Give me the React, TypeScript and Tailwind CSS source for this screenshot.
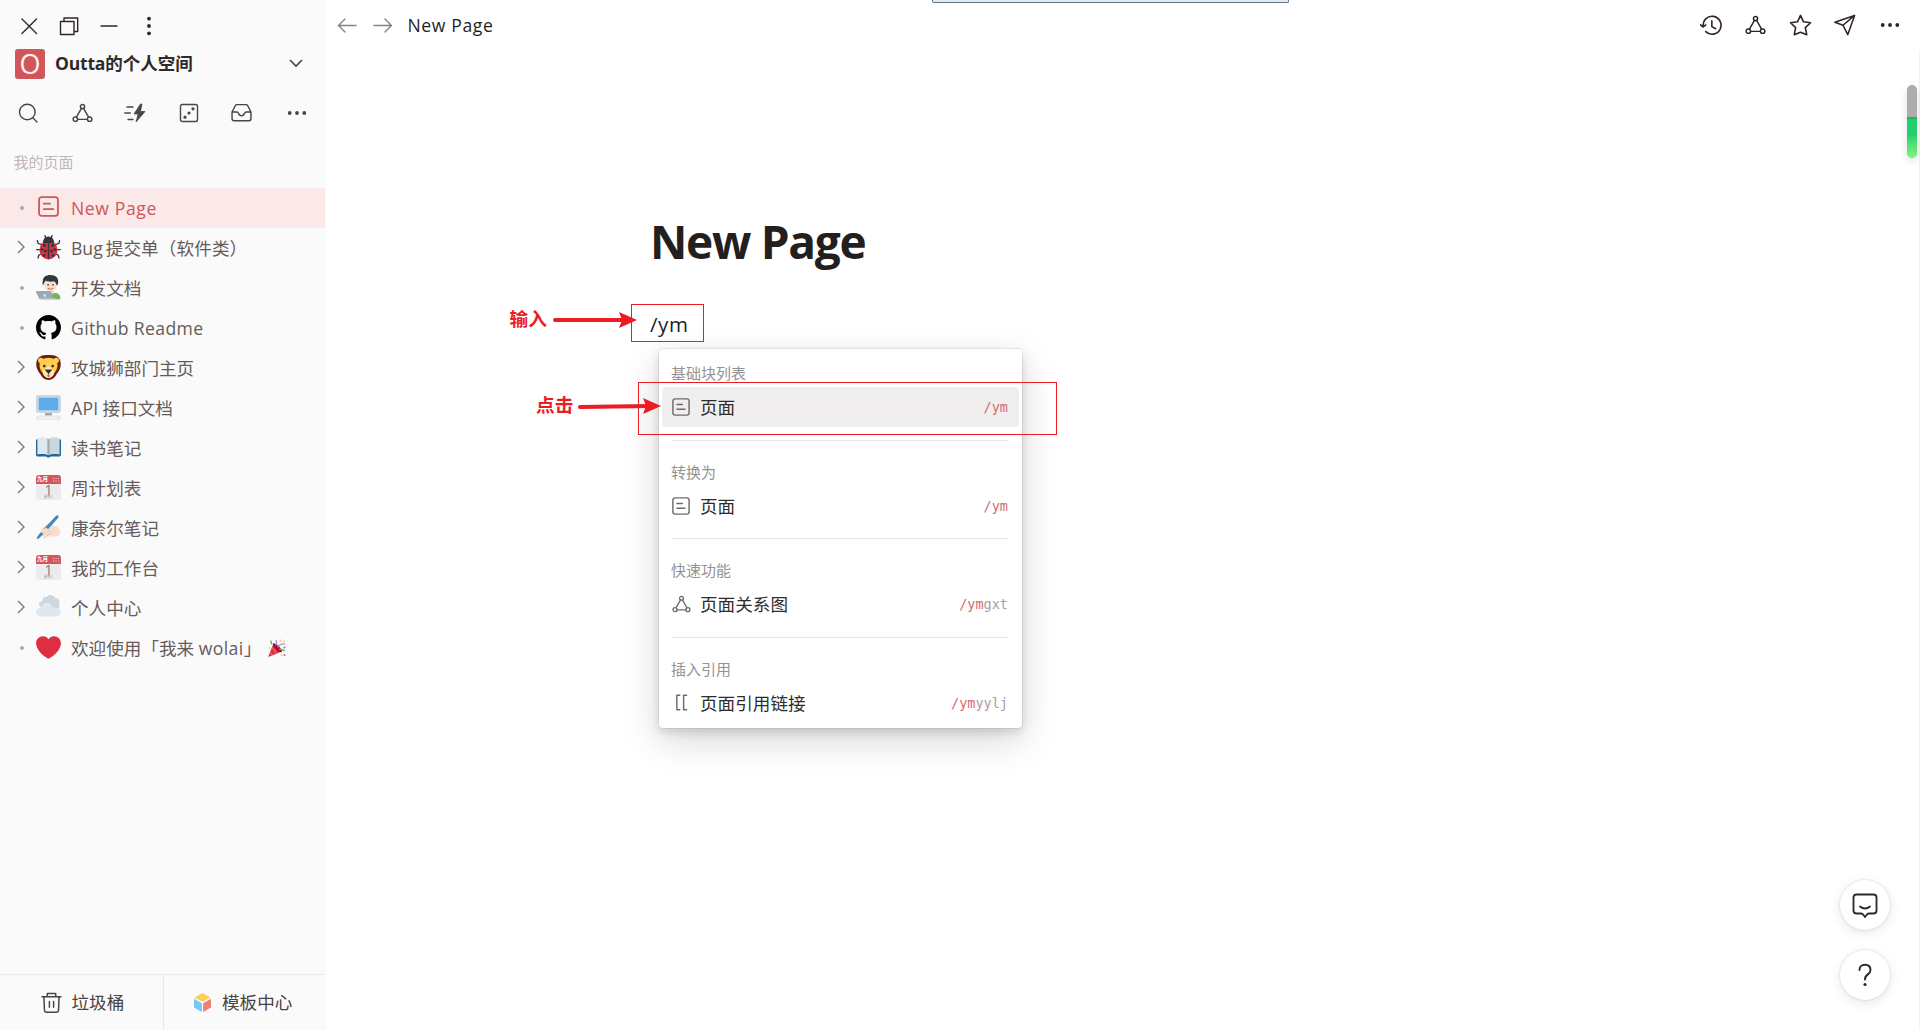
import type { ReactNode } from 'react';

const sans = "font-['Open_Sans','Noto_Sans_CJK_SC',sans-serif]";

type IconProps = { className?: string };

function Stroke({ children, size = 20, width = 1.4, className = '' }: { children: ReactNode; size?: number; width?: number; className?: string }) {
  return (
    <svg width={size} height={size} viewBox="0 0 20 20" fill="none" stroke="currentColor" strokeWidth={width} strokeLinecap="round" strokeLinejoin="round" className={`shrink-0 ${className}`}>
      {children}
    </svg>
  );
}

function GraphIcon({ size = 22, className = '' }: IconProps & { size?: number }) {
  return (
    <Stroke size={size} className={className}>
      <circle cx="10" cy="3.4" r="2" />
      <circle cx="3.2" cy="15.4" r="2.1" />
      <circle cx="16.8" cy="15.4" r="2.1" />
      <path d="M9 5.2 4.2 13.5M11 5.2l4.8 8.3M5.4 15.6h9.2" />
    </Stroke>
  );
}

function PageIcon({ size = 20, className = '', width = 1.4 }: IconProps & { size?: number; width?: number }) {
  return (
    <Stroke size={size} width={width} className={className}>
      <rect x="1" y="1" width="18" height="18" rx="2.5" />
      <path d="M5.5 7.3h6M5.5 12.6h9" />
    </Stroke>
  );
}

function Dots({ vertical = false }: { vertical?: boolean }) {
  return (
    <svg width="20" height="20" viewBox="0 0 20 20" fill="currentColor" className={vertical ? 'rotate-90' : ''}>
      <circle cx="2.7" cy="10" r="1.9" />
      <circle cx="10" cy="10" r="1.9" />
      <circle cx="17.3" cy="10" r="1.9" />
    </svg>
  );
}

function Emoji({ children }: { children: ReactNode }) {
  return <svg width="25" height="25" viewBox="0 0 36 36">{children}</svg>;
}

const ladybug = (
  <Emoji>
    <g stroke="#31373d" strokeWidth="2" strokeLinecap="round" fill="none">
      <path d="M8 14 3 12 2 8M28 14l5-2 1-4M7 21H1M29 21h6M8 27l-4 2-1 4M28 27l4 2 1 4" />
      <path d="M14 4l-1-3M22 4l1-3" />
    </g>
    <path d="M10 11c0-5 3-9 8-9s8 4 8 9z" fill="#31373d" />
    <ellipse cx="18" cy="21.5" rx="13" ry="13.5" fill="#dd2e44" />
    <path d="M17 8h2v27h-2z" fill="#31373d" />
    <path d="M9 11q9-6 18 0l-3 1q-6-2-12 0z" fill="#31373d" />
    <g fill="#31373d">
      <circle cx="12" cy="15" r="2.3" /><circle cx="24" cy="15" r="2.3" />
      <circle cx="8.7" cy="21" r="2" /><circle cx="27.3" cy="21" r="2" />
      <circle cx="13.5" cy="23" r="2.2" /><circle cx="22.5" cy="23" r="2.2" />
      <circle cx="11.5" cy="29.5" r="2" /><circle cx="24.5" cy="29.5" r="2" />
    </g>
  </Emoji>
);

const technologist = (
  <Emoji>
    <path d="M8 36v-4c0-4 4-6 8-6h11c5 0 8 3 8 7v2z" fill="#77b255" />
    <path d="M17 22h8v5q-4 4-8 0z" fill="#f3d2c3" />
    <ellipse cx="21" cy="14" rx="9" ry="10.5" fill="#f7dece" />
    <path d="M21 0c7 0 11 4 11 9 0 4-1 6-2 6-1-3-2-5-4-6-3 1-9 1-12-1-1 2-3 3-3.500 7C9 14 9 11 10 8c0-5 4-8 11-8z" fill="#31373d" />
    <circle cx="17.500" cy="14" r="1.200" fill="#662113" /><circle cx="24.500" cy="14" r="1.200" fill="#662113" />
    <path d="M17 19q4 3 8 0" stroke="#c1694f" strokeWidth="1.500" fill="none" />
    <path d="M1 23h19c1 0 2 1 2.300 2L25 35H5L0 25c0-1 0-2 1-2z" fill="#99aab5" />
    <path d="M5 34h24c1 0 1 2 0 2H7z" fill="#ccd6dd" />
    <ellipse cx="12.500" cy="29.500" rx="1.600" ry="2.200" fill="#e1e8ed" />
  </Emoji>
);

const github = (
  <svg width="25" height="25" viewBox="0 0 16 16">
    <path d="M8 0C3.580 0 0 3.580 0 8c0 3.540 2.290 6.530 5.470 7.590.4.070.55-.17.55-.38 0-.19-.01-.82-.01-1.490-2.010.37-2.530-.49-2.690-.94-.09-.23-.48-.94-.82-1.130-.28-.15-.68-.52-.01-.53.63-.01 1.080.58 1.230.82.72 1.210 1.870.87 2.330.66.070-.52.28-.87.51-1.070-1.780-.2-3.640-.89-3.640-3.950 0-.87.31-1.590.82-2.150-.08-.2-.36-1.020.080-2.120 0 0 .67-.21 2.200.82.64-.18 1.320-.27 2-.27.68 0 1.360.090 2 .27 1.530-1.040 2.200-.82 2.200-.82.44 1.100.16 1.920.080 2.120.51.56.82 1.270.82 2.150 0 3.070-1.870 3.750-3.650 3.950.29.25.54.73.54 1.480 0 1.070-.01 1.930-.01 2.200 0 .21.15.46.55.38A8.013 8.013 0 0016 8c0-4.420-3.580-8-8-8z" />
  </svg>
);

const lion = (
  <Emoji>
    <path d="M18 0C8 0 5 2 2 6c-2 4-2 8-1 12 1 3 2 6 5 9 2 5 7 9 12 9s10-4 12-9c3-3 4-6 5-9 1-4 1-8-1-12-3-4-6-6-16-6z" fill="#662113" />
    <circle cx="7" cy="8" r="4" fill="#ffcc4d" /><circle cx="29" cy="8" r="4" fill="#ffcc4d" />
    <path d="M18 4C11 4 6 8 5 14c0 5 2 9 5 12 2 4 5 7 8 7s6-3 8-7c3-3 5-7 5-12C30 8 25 4 18 4z" fill="#ffcc4d" />
    <path d="M18 16l5 5c3 1 4 3 3 6-1 4-5 6-8 6s-7-2-8-6c-1-3 0-5 3-6z" fill="#ffe8b6" />
    <path d="M14 21h8c1 0 1 1 0 2l-3 3v2h-2v-2l-3-3c-1-1-1-2 0-2z" fill="#292f33" />
    <circle cx="12" cy="16" r="1.900" fill="#292f33" /><circle cx="24" cy="16" r="1.900" fill="#292f33" />
    <path d="M16 29h4v1q-2 3-4 0z" fill="#dd2e44" />
  </Emoji>
);

const computer = (
  <Emoji>
    <path d="M13 24h10v6H13z" fill="#99aab5" />
    <rect width="36" height="26" rx="4" fill="#ccd6dd" />
    <rect x="4" y="4" width="28" height="18" rx="1" fill="#5dadec" />
    <rect x="0" y="29.500" width="36" height="6.500" rx="3" fill="#e1e8ed" />
    <path d="M3 31.700h30M4 34h28" stroke="#fff" strokeWidth="1.200" strokeDasharray="2 1" />
  </Emoji>
);

const book = (
  <Emoji>
    <path d="M1.500 6h33c1 0 1.500 1 1.500 2v20c0 2-1 3-3 3H21c-1 2-5 2-6 0H3c-2 0-3-1-3-3V8c0-1 .5-2 1.500-2z" fill="#226699" />
    <path d="M2 5c6-3 13-2 16 1v23c-4-2-10-2-16-1z" fill="#e1e8ed" />
    <path d="M34 5c-6-3-13-2-16 1v23c4-2 10-2 16-1z" fill="#ccd6dd" />
    <path d="M16 4.500q1.500.5 2 1.500v23q-1-1-2-1zM20 4.500q-1.500.5-2 1.500v23q1-1 2-1z" fill="#99aab5" opacity=".7" />
  </Emoji>
);

const calendar = (
  <span className="flex h-[25px] w-[25px] flex-col overflow-hidden rounded-[3px] bg-[#ececec]">
    <span className="flex h-[9px] shrink-0 items-center justify-between bg-[#d3565c] pr-[2px] pl-px">
      <span className="text-[5.500px] leading-[9px] font-bold text-white">九月</span>
      <svg width="6" height="4" viewBox="0 0 6 4" fill="#f5cfd1"><path d="M0 0h1v1H0zM2.500 0h1v1h-1zM5 0h1v1H5zM0 2.500h1v1H0zM2.500 2.500h1v1h-1zM5 2.500h1v1H5z" /></svg>
    </span>
    <span className="h-[11px] shrink-0 text-center text-[14px] leading-[12px] text-[#7b7b7b]">1</span>
    <span className="h-[4px] text-center text-[3px] leading-[4px] text-[#8899a6]">星期三</span>
  </span>
);

const writing = (
  <Emoji>
    <path d="M8 20c2-3 9-8 13-8l6 4c4 0 8 4 8 8 0 5-4 7-9 7h-9l-4 3c-2 1-3-1-2-3l-5-1c-3-1-3-3 0-4z" fill="#f7dece" />
    <path d="M12 25l9-3M14 31l7-5M10 21l8-4" stroke="#e5b9a3" strokeWidth="1.300" fill="none" />
    <path d="M29 1c1-2 5 0 3 3L16 22l-4-3z" fill="#3b88c3" />
    <path d="M14 18l-4 6c3 0 4 1 4 2l5-5z" fill="#f7dece" />
    <path d="M7 25l4 2-7 7-3 1 1-4z" fill="#3b88c3" />
  </Emoji>
);

const cloud = (
  <Emoji>
    <path d="M5 16c-2-4 1-7 4-7 0-5 3-7 6-6 4-5 12-3 13 2 4-1 7 3 5 7 2 4 0 8-4 8H10z" fill="#ccd6dd" />
    <path d="M27 18c-1 0-2 0-3 .500C23 14 20 11 16 11c-5 0-8 3-8 8-5-1-8 3-8 6 0 4 3 6 6 6h22c5 0 8-3 8-6.500S32 18 27 18z" fill="#e1e8ed" />
  </Emoji>
);

const heart = (
  <Emoji>
    <path fill="#dd2e44" d="M35.885 11.833c0-5.450-4.418-9.868-9.867-9.868-3.308 0-6.227 1.633-8.018 4.129-1.791-2.496-4.710-4.129-8.017-4.129-5.450 0-9.868 4.417-9.868 9.868 0 .772.098 1.520.266 2.241C1.751 22.587 11.216 31.568 18 34.034c6.783-2.466 16.249-11.447 17.617-19.959.170-.721.268-1.469.268-2.242z" />
  </Emoji>
);

const party = (
  <svg width="18" height="18" viewBox="0 0 36 36" className="ml-[7px] inline-block align-[-2px]">
    <path d="M11 9L1 34c-1 2 0 2 2 1l25-10z" fill="#dd2e44" />
    <path d="M8 17l9 12M4 27l5 5" stroke="#ea596e" strokeWidth="3" />
    <ellipse cx="19" cy="17.500" rx="4" ry="12" transform="rotate(-45 19 17.500)" fill="#a0041e" />
    <path d="M19 17c3-5 7-8 15-7M15 13c3-4 3-7 1-11" stroke="#aa8dd8" strokeWidth="2.500" fill="none" />
    <path d="M22 21c4-2 8 0 12 3M5 3l3 8" stroke="#77b255" strokeWidth="3" fill="none" />
    <g fill="#ffcc4d"><circle cx="25" cy="3" r="2.200" /><circle cx="32" cy="5" r="2" /><circle cx="27" cy="32" r="2" /><circle cx="3" cy="18" r="2" /></g>
    <g fill="#9266cc"><circle cx="33" cy="17" r="2" /><circle cx="33" cy="32" r="2" /></g>
  </svg>
);

type Item = { label: ReactNode; icon: ReactNode; expandable?: boolean; active?: boolean };

const items: Item[] = [
  { label: <span className="tracking-[0.600px]">New Page</span>, icon: <PageIcon size={21} width={1.700} className="mx-[2px] mb-[3px]" />, active: true },
  { label: <><span>Bug</span><span className="ml-[3px] tracking-[0.100px]">提交单（软件类）</span></>, icon: ladybug, expandable: true },
  { label: '开发文档', icon: technologist },
  { label: <span className="tracking-[0.350px]">Github Readme</span>, icon: github },
  { label: '攻城狮部门主页', icon: lion, expandable: true },
  { label: <><span className="tracking-[0.300px]">API</span><span className="ml-[4px]">接口文档</span></>, icon: computer, expandable: true },
  { label: '读书笔记', icon: book, expandable: true },
  { label: '周计划表', icon: calendar, expandable: true },
  { label: '康奈尔笔记', icon: writing, expandable: true },
  { label: '我的工作台', icon: calendar, expandable: true },
  { label: '个人中心', icon: cloud, expandable: true },
  { label: <>欢迎使用「我来 <span className="tracking-[0.400px]">wolai</span>」{party}</>, icon: heart },
];

function SidebarRow({ item }: { item: Item }) {
  return (
    <li className={`flex h-10 items-center ${item.active ? 'bg-[#fbe8e9] text-[#cf5659]' : 'text-[#665a5b]'}`}>
      <span className="flex w-[36px] justify-center pl-[7px]">
        {item.expandable ? (
          <svg width="8" height="14" viewBox="0 0 8 14" fill="none" stroke="#8a7d7e" strokeWidth="1.500" className="-mt-[2px] -ml-px"><path d="M1 1l6 6-6 6" /></svg>
        ) : (
          <span className="-mt-px h-1 w-1 rounded-full bg-[#adabab]" />
        )}
      </span>
      <span className="-mt-px flex w-[25px] justify-center">{item.icon}</span>
      <span className="ml-[10px] text-[17.600px] leading-6 whitespace-nowrap">{item.label}</span>
    </li>
  );
}

function Sidebar() {
  return (
    <aside className="flex h-full w-[326px] shrink-0 flex-col bg-[#fafafa] pr-px">
      <div className="flex h-[45px] items-center gap-5 pt-[6px] pl-[18.500px] text-[#302626]">
        <Stroke><path d="M3 3l14.500 14.500M17.500 3L3 17.500" /></Stroke>
        <Stroke><path d="M1.500 5.500h13.500v13H1.500zM5 5V2h13.700v13.500H15.500" /></Stroke>
        <Stroke><path d="M2 10h16" /></Stroke>
        <Dots vertical />
      </div>
      <div className="flex h-[36px] items-center pt-px pr-[21px] pl-[15px]">
        <span className="flex h-[30px] w-[30px] items-center justify-center rounded-[3px] bg-[#d15659] pb-px text-[27px] leading-none font-normal text-[#fff1f1]">O</span>
        <span className="ml-[10px] grow text-[17.500px] font-bold whitespace-nowrap text-[#2f2a2a]"><span className="tracking-[-0.200px]">Outta</span>的个人空间</span>
        <svg width="16" height="10" viewBox="0 0 16 10" fill="none" stroke="#4a4344" strokeWidth="1.600" className="-mt-px"><path d="M2 2l6 6 6-6" /></svg>
      </div>
      <div className="flex h-[62px] items-center justify-between pt-[2px] pr-[18.500px] pl-[18px] text-[#4a4546]">
        <Stroke><circle cx="9.300" cy="9" r="7.800" /><path d="M15 15l4 4" /></Stroke>
        <GraphIcon size={21} className="ml-px" />
        <svg width="22" height="20" viewBox="0 0 22 20" fill="currentColor" className="-ml-px">
          <path d="M16.500 1L10 11h4.200L12 19l9-10.500h-4.500L18 1z" stroke="currentColor" strokeWidth=".8" strokeLinejoin="round" />
          <path d="M3 4h6M.800 10h5.500M4 16.500h5" stroke="currentColor" strokeWidth="1.400" strokeLinecap="round" />
        </svg>
        <Stroke>
          <rect x="1.500" y="1.500" width="17" height="17" rx="1.800" />
          <g fill="currentColor" stroke="none"><circle cx="6" cy="14.200" r="1.600" /><circle cx="10" cy="10" r="1.600" /><circle cx="14" cy="5.800" r="1.600" /></g>
        </Stroke>
        <Stroke size={21} className="mr-[2px] -mt-px"><path d="M1 9.500L4.200 3.300q.4-.8 1.300-.800h9q.9 0 1.300.8L19 9.500V16q0 1.800-1.800 1.800H2.800Q1 17.800 1 16zM1 9.500h4.500q1.200 0 1.500 1 1 2.600 3 2.600t3-2.600q.3-1 1.500-1H19" /></Stroke>
        <Dots />
      </div>
      <div className="flex h-[45px] items-center pl-[13.500px] text-[15px] text-[#bfb6b5]"><span className="pb-[7px]">我的页面</span></div>
      <ul>
        {items.map((item, i) => <SidebarRow key={i} item={item} />)}
      </ul>
      <div className="mt-auto flex h-[56px] border-t border-[#ececec] text-[17.600px] text-[#494343]">
        <div className="flex w-[164px] items-center border-r border-[#e6e6e6] pl-[41px]">
          <Stroke size={21}>
            <path d="M1 4.500h18M6 4V1.500h8V4M2.800 5l.5 12.500q.1 1.700 1.700 1.700h10q1.600 0 1.700-1.700L17.200 5M8 9v5.500M12 9v5.500" />
          </Stroke>
          <span className="ml-[9.500px]">垃圾桶</span>
        </div>
        <div className="flex items-center pl-[30px]">
          <svg width="17" height="19" viewBox="0 0 18 20">
            <path d="M9 0l8.500 4.600L9 9.300.5 4.600z" fill="#ffcf4e" />
            <path d="M0 6l8.300 4.700V20L0 15.300z" fill="#71c9f5" />
            <path d="M18 6l-8.300 4.700V20l8.300-4.700z" fill="#f07d76" />
          </svg>
          <span className="ml-[11px]">模板中心</span>
        </div>
      </div>
    </aside>
  );
}

function Header() {
  return (
    <header className="flex h-[50px] items-center pr-[20px] pl-[11px]">
      <Stroke className="text-[#8b8081]"><path d="M19 10.500H1.500M8 4l-6.500 6.500L8 17" /></Stroke>
      <Stroke className="ml-[16px] text-[#8b8081]"><path d="M1 10.500h17.500M12 4l6.500 6.500L12 17" /></Stroke>
      <span className="ml-[14.500px] grow text-[17.600px] tracking-[0.600px] text-[#231f1f]">New Page</span>
      <div className="flex items-center text-[#2f2527]">
        <Stroke size={23} width={1.400}><path d="M2.800 11A7.800 7.800 0 1 1 5 15.300M.5 9.500l2.300 1.800L5 9.500M10.300 6v5l3.300 1.800" /></Stroke>
        <GraphIcon size={21} className="ml-[22px]" />
        <Stroke size={23} width={1.400} className="ml-[23px]"><path d="M10 1.200l2.600 5.600 6.100.8-4.500 4.200 1.200 6.200L10 15.900 4.600 18l1.200-6.200L1.300 7.600l6.100-.8z" /></Stroke>
        <Stroke size={22} width={1.400} className="ml-[22px]"><path d="M18.700 1.300L.8 7.500l7.400 2.700 4.300 8.600zM18.700 1.300L8.200 10.200" /></Stroke>
        <span className="ml-[24px]"><Dots /></span>
      </div>
    </header>
  );
}

type Command = { group: string; label: string; rest: string; icon: ReactNode; active?: boolean };

const commands: Command[] = [
  { group: '基础块列表', label: '页面', rest: '', icon: <PageIcon size={18} width={1.600} />, active: true },
  { group: '转换为', label: '页面', rest: '', icon: <PageIcon size={18} width={1.600} /> },
  { group: '快速功能', label: '页面关系图', rest: 'gxt', icon: <GraphIcon size={19} /> },
  { group: '插入引用', label: '页面引用链接', rest: 'yylj', icon: <Stroke size={17} width={1.700}><path d="M8 1.500H4.500v17H8M16 1.500h-3.500v17H16" /></Stroke> },
];

function CommandMenu() {
  return (
    <div className="absolute top-[349px] left-[659px] h-[379px] w-[363px] rounded-[4px] bg-white px-[3px] pt-[13px] shadow-[0_0_0_1px_rgba(0,0,0,0.06),0_4px_10px_rgba(0,0,0,0.12),0_12px_36px_rgba(0,0,0,0.17)]">
      {commands.map((c, i) => (
        <section key={c.group} className="h-[98.500px]">
          <h3 className="h-[25px] pl-[9px] text-[15px] leading-[22px] text-[#949292]">{c.group}</h3>
          <div className={`flex h-10 items-center rounded-[4px] pr-[11px] pl-[9px] ${c.active ? 'bg-[#f1eeef]' : ''}`}>
            <span className="flex w-5 justify-center text-[#6f6a6b]">{c.icon}</span>
            <span className="ml-[9px] grow pt-px text-[17.600px] text-[#302c2c]">{c.label}</span>
            <span className="pt-px font-['DejaVu_Sans_Mono',monospace] text-[13.500px] text-[#a5a1a1]"><span className="text-[#d46a6d]">/ym</span>{c.rest}</span>
          </div>
          {i < commands.length - 1 && <hr className="mx-[10px] mt-[12.500px] border-[#e6e6e6]" />}
        </section>
      ))}
    </div>
  );
}

function Annotations() {
  return (
    <div className="pointer-events-none text-[18.700px] leading-6 font-bold text-[#ed1c24]">
      <div className="absolute top-[304px] left-[631px] h-[38px] w-[73px] border border-[#ed1c24]" />
      <div className="absolute top-[382px] left-[638px] h-[53px] w-[419px] border border-[#ed1c24]" />
      <span className="absolute top-[307px] left-[509.500px]">输入</span>
      <span className="absolute top-[393px] left-[536px]">点击</span>
      <svg className="absolute top-[311px] left-[552px]" width="86" height="18" viewBox="0 0 86 18">
        <path d="M3 9h70" stroke="#ed1c24" strokeWidth="4" strokeLinecap="round" />
        <path d="M67 1l18 8-18 8 3-8z" fill="#ed1c24" />
      </svg>
      <svg className="absolute top-[397px] left-[577px]" width="85" height="18" viewBox="0 0 85 18">
        <path d="M3 10l70-1" stroke="#ed1c24" strokeWidth="4" strokeLinecap="round" />
        <path d="M66 1l18 8-18 8 3-8z" fill="#ed1c24" />
      </svg>
    </div>
  );
}

export default function App() {
  return (
    <div className={`relative flex h-[1030px] w-[1920px] overflow-hidden bg-white ${sans}`}>
      <Sidebar />
      <main className="flex min-w-0 grow flex-col">
        <Header />
        <article className="grow border-r border-[#f2f2f2] pt-[157px] pl-[324px]">
          <h1 className="h-[68px] text-[46px] leading-[68px] font-bold tracking-[-1.300px] whitespace-nowrap text-[#231f1f]">New Page</h1>
          <p className="mt-[34px] text-[20.500px] leading-[30px] tracking-[0.600px] text-[#231f1f]">/ym</p>
        </article>
      </main>

      <div className="absolute top-0 left-[932px] h-[3px] w-[357px] rounded-b-[2px] border-x border-b border-[#66727c] bg-[#dfeaf4]" />
      <div className="absolute top-[85px] left-[1907px] h-[73px] w-[10px] overflow-hidden rounded-full bg-[#adadad] shadow-[0_3px_8px_rgba(0,0,0,0.12)]">
        <div className="mt-[32px] h-[41px] border-t-2 border-[#1fb45f] bg-gradient-to-b from-[#23cf6d] from-40% to-[#7df57f]" />
      </div>

      <CommandMenu />
      <Annotations />

      <div className="absolute top-[880px] left-[1840px] flex flex-col gap-5 text-[#2f2527]">
        <button className="flex h-[50px] w-[50px] items-center justify-center rounded-full bg-white shadow-[0_0_0_1px_rgba(0,0,0,0.06),0_3px_12px_rgba(0,0,0,0.1)]">
          <svg width="26" height="26" viewBox="0 0 26 26" fill="none" stroke="currentColor" strokeWidth="1.800" strokeLinecap="round" strokeLinejoin="round">
            <path d="M4.500 2.500h17q3 0 3 3v13q0 3-3 3H17q-1.500 0-2.500 1.500L13 25l-1.500-2q-1-1.500-2.500-1.500H4.500q-3 0-3-3v-13q0-3 3-3zM8 14.500q5 4 10 0" />
          </svg>
        </button>
        <button className="flex h-[50px] w-[50px] items-center justify-center rounded-full bg-white shadow-[0_0_0_1px_rgba(0,0,0,0.06),0_3px_12px_rgba(0,0,0,0.1)]">
          <svg width="14" height="24" viewBox="0 0 14 24" fill="none" stroke="currentColor" strokeWidth="1.900" strokeLinecap="round">
            <path d="M1.500 7q0-5.200 5.500-5.200T12.500 7q0 2.500-2.700 4.400Q7 13.300 7 16.500" />
            <circle cx="7" cy="21.500" r="1.600" fill="currentColor" stroke="none" />
          </svg>
        </button>
      </div>
    </div>
  );
}
